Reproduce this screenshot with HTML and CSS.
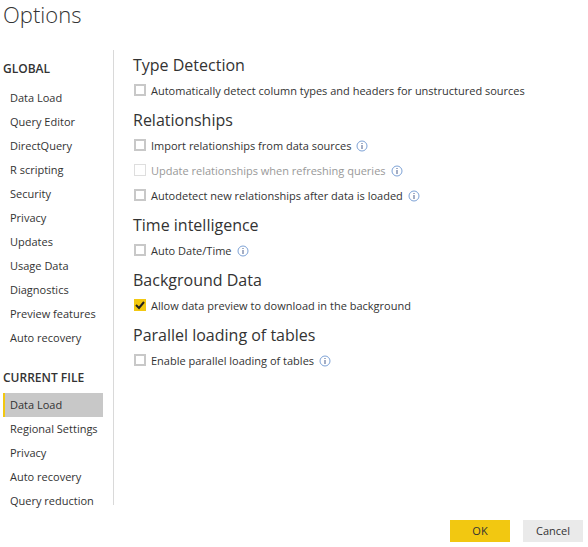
FILE: index.html
```html
<!DOCTYPE html>
<html lang="en">
<head>
<meta charset="utf-8">
<meta name="viewport" content="width=device-width, initial-scale=1">
<title>Options</title>
<link rel="stylesheet" href="styles.css">
</head>
<body>
<svg class="defs" aria-hidden="true">
  <symbol id="info" viewBox="0 0 12 12">
    <circle cx="6" cy="6" r="5" fill="none" stroke="#7da2d6"/>
    <path d="M5.5 3h1v1h-1zM5.5 5h1v4h-1z" fill="#4a5f8c"/>
  </symbol>
</svg>
<form class="dialog">
  <h1 class="title">Options</h1>
  <div class="body">
    <nav class="sidebar">
      <h2 class="group">GLOBAL</h2>
      <ul class="list">
        <li><a class="item" href="#">Data Load</a></li>
        <li><a class="item" href="#">Query Editor</a></li>
        <li><a class="item" href="#">DirectQuery</a></li>
        <li><a class="item" href="#">R scripting</a></li>
        <li><a class="item" href="#">Security</a></li>
        <li><a class="item" href="#">Privacy</a></li>
        <li><a class="item" href="#">Updates</a></li>
        <li><a class="item" href="#">Usage Data</a></li>
        <li><a class="item" href="#">Diagnostics</a></li>
        <li><a class="item" href="#">Preview features</a></li>
        <li><a class="item" href="#">Auto recovery</a></li>
      </ul>
      <h2 class="group">CURRENT FILE</h2>
      <ul class="list">
        <li><a class="item selected" href="#" aria-current="page">Data Load</a></li>
        <li><a class="item" href="#">Regional Settings</a></li>
        <li><a class="item" href="#">Privacy</a></li>
        <li><a class="item" href="#">Auto recovery</a></li>
        <li><a class="item" href="#">Query reduction</a></li>
      </ul>
    </nav>
    <main class="content">
      <section class="section">
        <h2 class="heading">Type Detection</h2>
        <div class="row"><input class="check" type="checkbox" id="types"><label for="types">Automatically detect column types and headers for unstructured sources</label></div>
      </section>
      <section class="section">
        <h2 class="heading">Relationships</h2>
        <div class="row"><input class="check" type="checkbox" id="import"><label for="import">Import relationships from data sources</label><svg class="info"><use href="#info"/></svg></div>
        <div class="row"><input class="check" type="checkbox" id="update" disabled><label for="update">Update relationships when refreshing queries</label><svg class="info"><use href="#info"/></svg></div>
        <div class="row"><input class="check" type="checkbox" id="autodetect"><label for="autodetect">Autodetect new relationships after data is loaded</label><svg class="info"><use href="#info"/></svg></div>
      </section>
      <section class="section">
        <h2 class="heading">Time intelligence</h2>
        <div class="row"><input class="check" type="checkbox" id="datetime"><label for="datetime">Auto Date/Time</label><svg class="info"><use href="#info"/></svg></div>
      </section>
      <section class="section">
        <h2 class="heading">Background Data</h2>
        <div class="row"><span class="tick"><input class="check" type="checkbox" id="preview" checked><svg class="mark" viewBox="0 0 12 12"><path d="M2 6l3 3 5-6" fill="none" stroke="#222" stroke-width="2"/></svg></span><label for="preview">Allow data preview to download in the background</label></div>
      </section>
      <section class="section">
        <h2 class="heading">Parallel loading of tables</h2>
        <div class="row"><input class="check" type="checkbox" id="parallel"><label for="parallel">Enable parallel loading of tables</label><svg class="info"><use href="#info"/></svg></div>
      </section>
    </main>
  </div>
  <footer class="footer">
    <button class="button primary" type="button">OK</button>
    <button class="button" type="button">Cancel</button>
  </footer>
</form>
</body>
</html>
```
FILE: styles.css
```css
* {
  box-sizing: border-box;
}

body {
  margin: 0;
  background: #fff;
  color: #333;
  font: 11px/24px "Segoe UI", "Open Sans", sans-serif;
}

h1, h2, ul {
  margin: 0;
  padding: 0;
  font-weight: 400;
}

.defs {
  display: none;
}

.dialog {
  padding: 0 5px 5px 3px;
}

.title {
  margin-bottom: 22px;
  font-family: "Segoe UI Light", "Open Sans", sans-serif;
  font-size: 22px;
  font-weight: 300;
  line-height: 28px;
}

.body {
  display: grid;
  grid-template-columns: 110px 1fr;
}

/* The last entry hangs past the end of the divider. */
.sidebar {
  padding-right: 10px;
  margin-bottom: -8px;
}

.group {
  padding: 7px 0 5px;
  font-size: 12px;
  font-weight: 600;
}

.list {
  list-style: none;
}

.list + .group {
  padding: 16px 0 3px;
}

.item {
  display: block;
  padding-left: 7px;
  color: inherit;
  text-decoration: none;
  white-space: nowrap;
}

.selected {
  padding-left: 5px;
  border-left: 2px solid #f2c811;
  background: #c8c8c8;
}

.content {
  border-left: 1px solid #d9d9d9;
  padding: 3px 0 0 19px;
}

.section {
  margin-bottom: 5px;
}

.heading {
  font-size: 16px;
  line-height: 25px;
}

.row {
  display: flex;
  align-items: center;
  height: 25px;
  gap: 5px;
}

.check {
  appearance: none;
  display: block;
  flex: none;
  width: 12px;
  height: 12px;
  margin: 0 0 1px 1px;
  border: 2px solid #c8c8c8;
  background: #fff;
}

.check:disabled {
  border: 1px solid #dedede;
}

.check:disabled + label {
  color: #999;
}

.check:checked {
  border: 0;
  background: #f2c811;
}

.tick {
  position: relative;
}

.mark {
  position: absolute;
  top: 0;
  left: 1px;
  width: 12px;
  height: 12px;
  pointer-events: none;
}

.info {
  width: 12px;
  height: 12px;
}

.footer {
  display: flex;
  justify-content: flex-end;
  gap: 13px;
  margin-top: 15px;
}

.button {
  width: 60px;
  height: 22px;
  padding: 0;
  border: 0;
  background: #eaeaea;
  color: #333;
  font: inherit;
  line-height: 22px;
}

.primary {
  background: #f2c811;
}
```
